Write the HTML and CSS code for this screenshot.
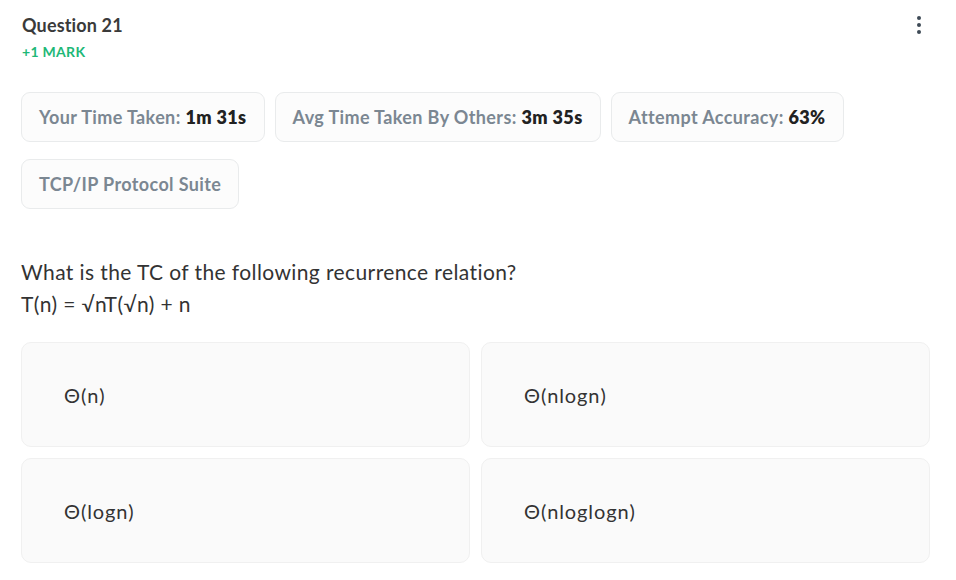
FILE: index.html
```html
<!DOCTYPE html>
<html>
<head>
<meta charset="utf-8">
<link rel="stylesheet" href="styles.css">
</head>
<body>
<div class="page">
  <div class="header">
    <div class="head-text">
      <div class="title">Question 21</div>
      <div class="mark">+1 MARK</div>
    </div>
    <div class="menu" aria-label="More">
      <span class="dot"></span><span class="dot"></span><span class="dot"></span>
    </div>
  </div>
  <div class="pills">
    <div class="pill">Your Time Taken: <b>1m 31s</b></div>
    <div class="pill">Avg Time Taken By Others: <b>3m 35s</b></div>
    <div class="pill">Attempt Accuracy: <b>63%</b></div>
    <div class="pill">TCP/IP Protocol Suite</div>
  </div>
  <div class="question">
    <p>What is the TC of the following recurrence relation?</p>
    <p>T(n) = √nT(√n) + n</p>
  </div>
  <div class="options">
    <div class="option">Θ(n)</div>
    <div class="option">Θ(nlogn)</div>
    <div class="option">Θ(logn)</div>
    <div class="option">Θ(nloglogn)</div>
  </div>
</div>
</body>
</html>
```
FILE: styles.css
```css
* { box-sizing: border-box; }
body {
  margin: 0;
  background: #fff;
  font-family: Lato, "Noto Sans", sans-serif;
  color: #333;
}
.page {
  padding: 14px 26px 0 21px;
}
.header {
  display: flex;
  justify-content: space-between;
  align-items: flex-start;
}
.title {
  font-size: 18px;
  letter-spacing: 0.15px;
  font-weight: 700;
  color: #3a3a3a;
  line-height: 22px;
  margin-left: 1px;
}
.mark {
  margin-top: 7px;
  font-size: 14px;
  letter-spacing: 0.3px;
  font-weight: 700;
  color: #1db877;
  line-height: 18px;
  margin-left: 1px;
}
.menu {
  display: flex;
  flex-direction: column;
  gap: 3px;
  padding-top: 2px;
  margin-right: 9px;
}
.dot {
  width: 4px;
  height: 4px;
  border-radius: 50%;
  background: #3e4a56;
}
.pills {
  display: flex;
  flex-wrap: wrap;
  column-gap: 10px;
  row-gap: 17px;
  margin-top: 31px;
  max-width: 880px;
}
.pill {
  height: 50px;
  display: flex;
  align-items: center;
  padding: 0 17px;
  border: 1px solid #e9ebec;
  border-radius: 9px;
  background: #fcfcfc;
  font-size: 18px;
  letter-spacing: 0.38px;
  font-weight: 700;
  color: #7b8792;
  white-space: pre;
}
.pill b {
  color: #222;
  font-weight: 800;
}
.question {
  margin-top: 47px;
  font-size: 21px;
  letter-spacing: 0.4px;
  line-height: 32px;
  color: #333;
}
.question p { margin: 0; }
.options {
  margin-top: 22px;
  display: grid;
  grid-template-columns: 1fr 1fr;
  gap: 11px;
  width: 909px;
}
.option {
  height: 105px;
  display: flex;
  align-items: center;
  padding-left: 42px;
  background: #fafafa;
  border: 1px solid #f0f0f0;
  border-radius: 10px;
  font-size: 20px;
  letter-spacing: 0.9px;
  color: #333;
}
```
